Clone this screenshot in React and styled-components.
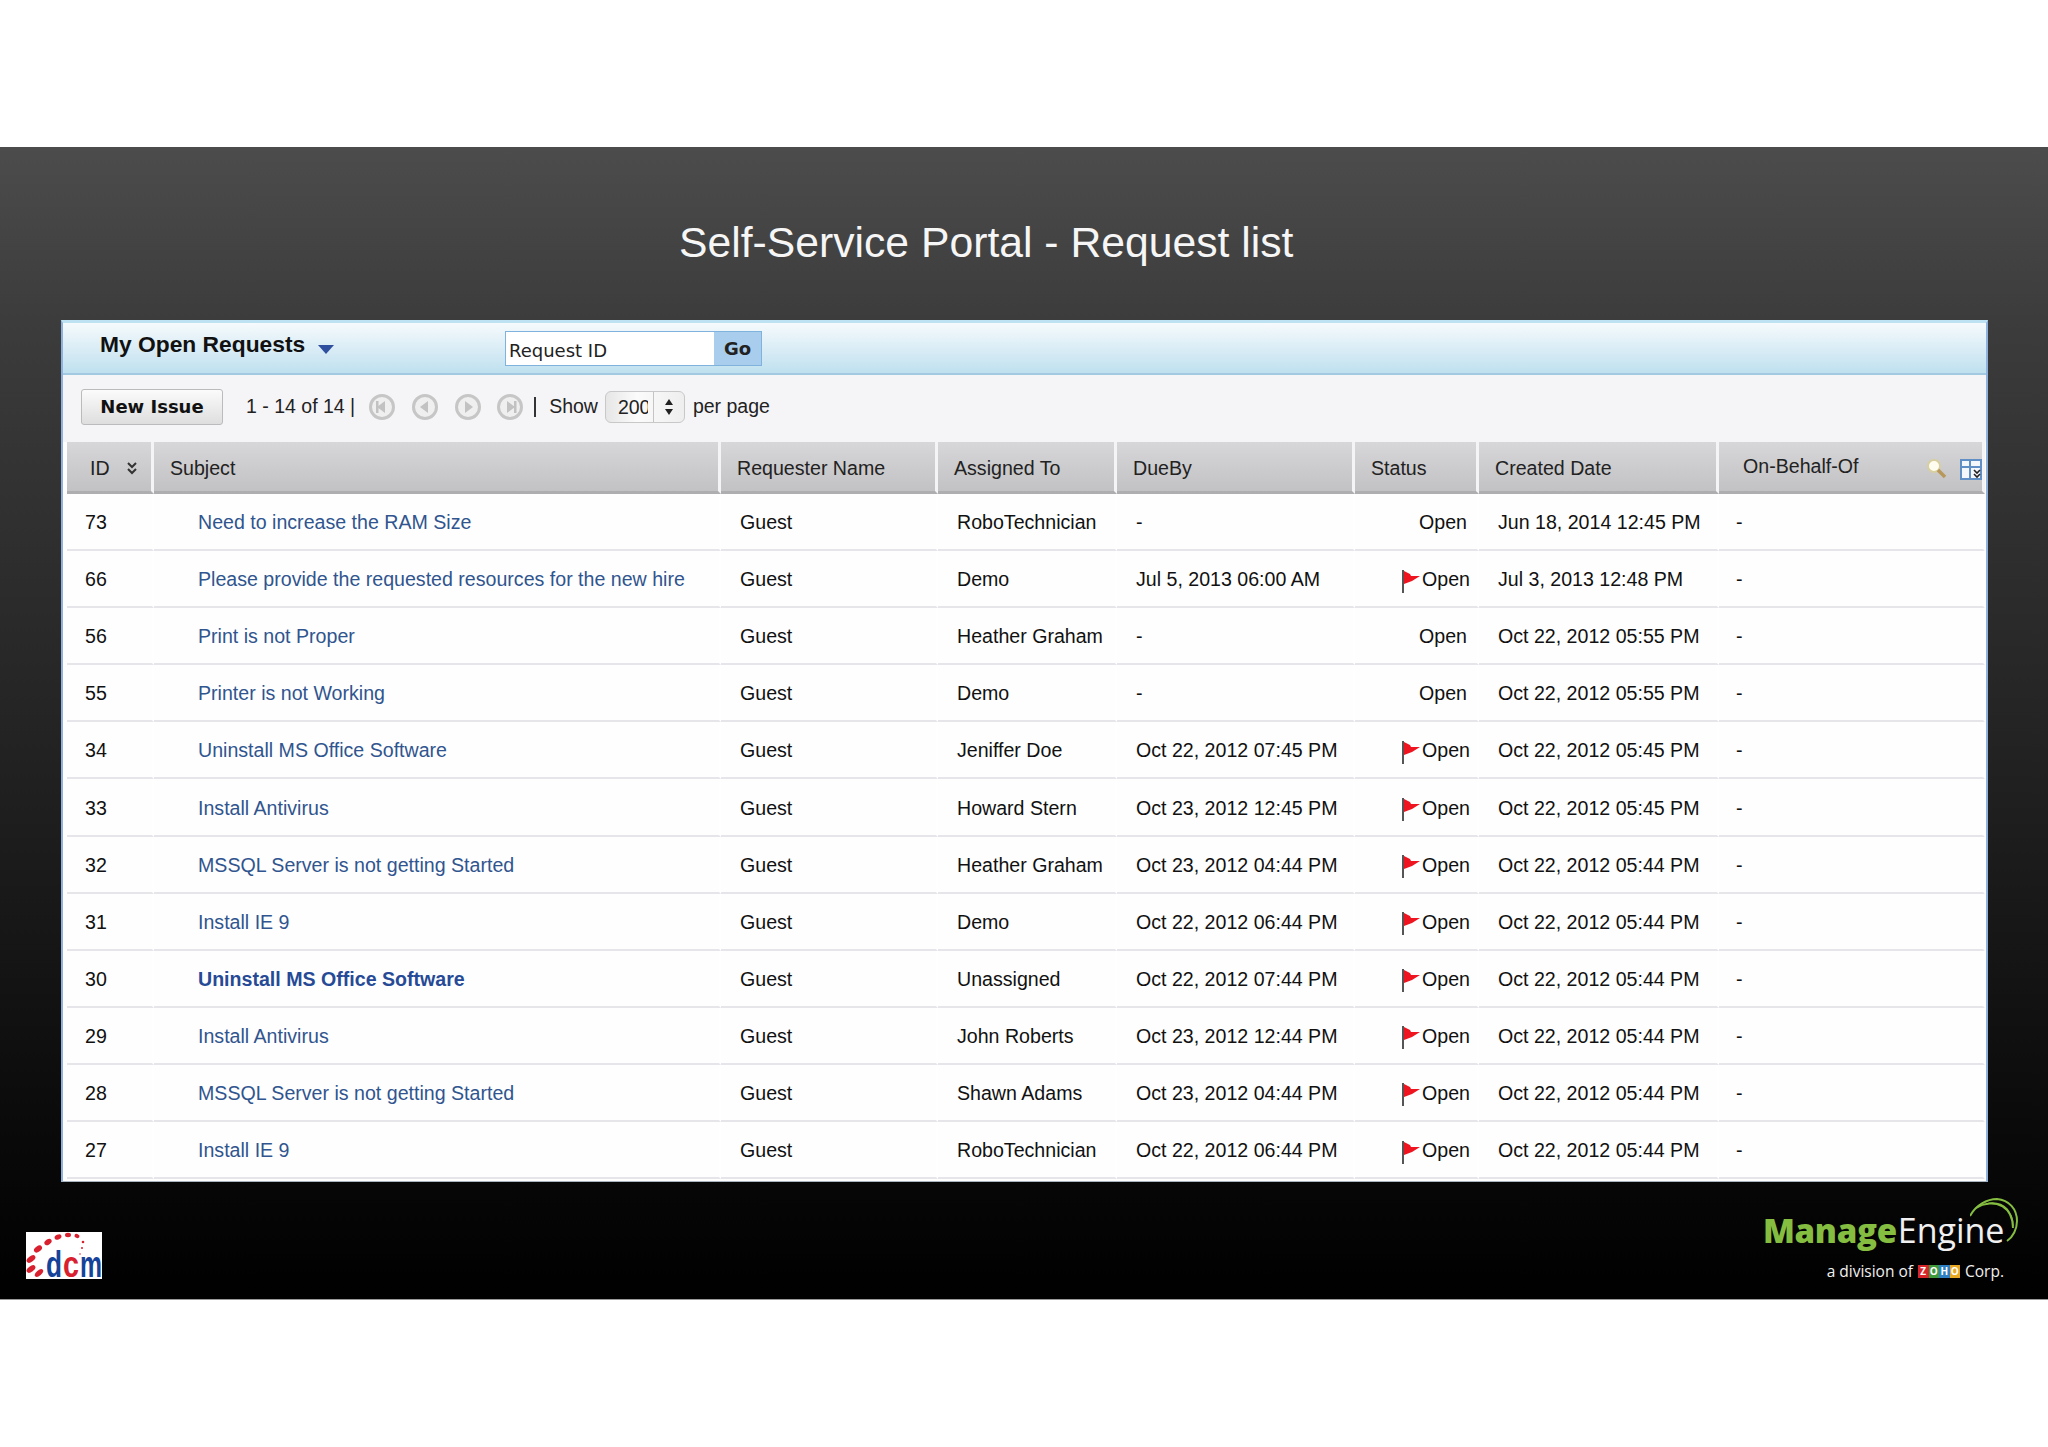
import React from "react";
import styled, { createGlobalStyle } from "styled-components";

const GlobalStyle = createGlobalStyle`
  html, body {
    margin: 0;
    padding: 0;
    background: #fff;
  }
  body {
    font-family: "Liberation Sans", Arial, sans-serif;
    color: #111;
  }
`;

const rows = [
  { id: 73, subject: "Need to increase the RAM Size", who: "RoboTechnician", due: "-", flag: false, created: "Jun 18, 2014 12:45 PM" },
  { id: 66, subject: "Please provide the requested resources for the new hire", who: "Demo", due: "Jul 5, 2013 06:00 AM", flag: true, created: "Jul 3, 2013 12:48 PM" },
  { id: 56, subject: "Print is not Proper", who: "Heather Graham", due: "-", flag: false, created: "Oct 22, 2012 05:55 PM" },
  { id: 55, subject: "Printer is not Working", who: "Demo", due: "-", flag: false, created: "Oct 22, 2012 05:55 PM" },
  { id: 34, subject: "Uninstall MS Office Software", who: "Jeniffer Doe", due: "Oct 22, 2012 07:45 PM", flag: true, created: "Oct 22, 2012 05:45 PM" },
  { id: 33, subject: "Install Antivirus", who: "Howard Stern", due: "Oct 23, 2012 12:45 PM", flag: true, created: "Oct 22, 2012 05:45 PM" },
  { id: 32, subject: "MSSQL Server is not getting Started", who: "Heather Graham", due: "Oct 23, 2012 04:44 PM", flag: true, created: "Oct 22, 2012 05:44 PM" },
  { id: 31, subject: "Install IE 9", who: "Demo", due: "Oct 22, 2012 06:44 PM", flag: true, created: "Oct 22, 2012 05:44 PM" },
  { id: 30, subject: "Uninstall MS Office Software", who: "Unassigned", due: "Oct 22, 2012 07:44 PM", flag: true, created: "Oct 22, 2012 05:44 PM", bold: true },
  { id: 29, subject: "Install Antivirus", who: "John Roberts", due: "Oct 23, 2012 12:44 PM", flag: true, created: "Oct 22, 2012 05:44 PM" },
  { id: 28, subject: "MSSQL Server is not getting Started", who: "Shawn Adams", due: "Oct 23, 2012 04:44 PM", flag: true, created: "Oct 22, 2012 05:44 PM" },
  { id: 27, subject: "Install IE 9", who: "RoboTechnician", due: "Oct 22, 2012 06:44 PM", flag: true, created: "Oct 22, 2012 05:44 PM" },
];

const columns = "87px 567px 217px 179px 238px 124px 240px 1fr";

const Page = styled.div`
  width: 2048px;
  height: 1447px;
  overflow: hidden;
  padding-top: 147px;
  box-sizing: border-box;
`;

const Slide = styled.section`
  height: 1152px;
  background: linear-gradient(#4c4c4c 0, #3c3c3c 15%, #242424 50%, #0a0a0a 85%, #000 100%);
  padding: 0 60px 0 61px;
  box-sizing: border-box;
  box-shadow: 0 1px 0 #999;
`;

const Title = styled.h1`
  margin: 0;
  height: 173px;
  padding: 69px 0 0 618px;
  box-sizing: border-box;
  font-weight: 400;
  font-size: 42.7px;
  line-height: 52px;
  color: #f6f6f6;
  white-space: nowrap;
`;

const Panel = styled.div`
  height: 862px;
  background: #fefefe;
  border-left: 2px solid #8fb1dd;
  border-right: 2px solid #8fb1dd;
  border-bottom: 1px solid #aab4c0;
  border-top: 3px solid #bfe2f2;
  box-sizing: border-box;
  overflow: hidden;
`;

const ViewBar = styled.div`
  height: 50px;
  display: flex;
  align-items: center;
  padding-left: 37px;
  background: linear-gradient(#f6fafc, #bfe0ef);
  border-bottom: 2px solid #a3c9e0;
  box-sizing: content-box;
`;

const ViewName = styled.div`
  width: 204px;
  font-weight: 700;
  font-size: 22.8px;
  margin-top: -7px;
  white-space: nowrap;
  color: #111;
`;

const Caret = styled.span`
  width: 0;
  height: 0;
  margin: 0 1px -2px 14px;
  border-left: 8.5px solid transparent;
  border-right: 8.5px solid transparent;
  border-top: 9px solid #2f4f9f;
`;

const Search = styled.div`
  display: flex;
  height: 33px;
  margin-left: 170px;
  border: 1px solid #7fb2dc;
  background: #fff;
`;

const SearchInput = styled.div`
  width: 208px;
  padding: 8px 0 0 3px;
  box-sizing: border-box;
  font-family: "DejaVu Sans", sans-serif;
  font-size: 18px;
  line-height: 22px;
  color: #222;
`;

const GoButton = styled.div`
  width: 47px;
  background: #a9cdec;
  text-align: center;
  font-family: "DejaVu Sans", sans-serif;
  font-weight: 700;
  font-size: 18px;
  line-height: 33px;
  color: #222;
`;

const Toolbar = styled.div`
  height: 67px;
  display: flex;
  align-items: center;
  padding: 0 0 4px 18px;
  box-sizing: border-box;
  background: #f5f4f7;
  font-size: 19.5px;
  color: #222;
`;

const NewIssue = styled.div`
  width: 142px;
  height: 36px;
  border: 1px solid #bbb;
  border-radius: 3px;
  box-sizing: border-box;
  background: linear-gradient(#fbfbfb, #dedede);
  text-align: center;
  font-family: "DejaVu Sans", sans-serif;
  font-weight: 700;
  font-size: 18px;
  line-height: 34px;
  color: #111;
`;

const PageCount = styled.span`
  margin: 0 0 0 23px;
  white-space: nowrap;
`;

const Pager = styled.svg`
  width: 28px;
  height: 28px;
  margin-left: ${(p) => p.$gap}px;
  flex: none;
`;

const Divider = styled.span`
  width: 2px;
  height: 20px;
  margin: 0 13px 0 10px;
  background: #333;
`;

const SelectBox = styled.div`
  display: flex;
  width: 80px;
  height: 32px;
  margin: 0 8px 0 7px;
  border: 1px solid #c8c8c8;
  border-radius: 6px;
  box-sizing: border-box;
  background: linear-gradient(90deg, #e6e6e6, #fbfbfb 40%, #eee);
  overflow: hidden;
`;

const SelectValue = styled.div`
  width: 48px;
  padding-left: 12px;
  box-sizing: border-box;
  border-right: 1px solid #c4c4c4;
  line-height: 30px;
`;

const SelectText = styled.span`
  display: block;
  width: 30px;
  overflow: hidden;
  white-space: nowrap;
`;

const SelectArrows = styled.div`
  flex: 1;
  display: flex;
  align-items: center;
  justify-content: center;
`;

const Grid = styled.div`
  display: grid;
  grid-template-columns: ${columns};
  margin: 0 0 0 4px;
  width: 1918px;
`;

const HeadCell = styled.div`
  position: relative;
  height: 52px;
  display: flex;
  align-items: center;
  padding: 3px 0 0 ${(p) => p.$indent ?? 16}px;
  box-sizing: border-box;
  background: linear-gradient(#d7d6d8, #c2c1c3);
  border-bottom: 3px solid #aeadaf;
  border-right: 3px solid #f4f4f6;
  font-size: 19.6px;
  color: #222;
  &:last-child {
    border-right: 0;
  }
`;

const SortMark = styled.svg`
  width: 12px;
  height: 14px;
  margin-left: 16px;
`;

const BehalfLabel = styled.span`
  margin-top: -4px;
`;

const HeadTools = styled.div`
  position: absolute;
  right: 0;
  top: 16px;
  display: flex;
  gap: 12px;
`;

const Cell = styled.div`
  height: 57.1px;
  display: flex;
  align-items: center;
  padding-top: 2px;
  padding-left: ${(p) => p.$indent ?? 19}px;
  justify-content: ${(p) => (p.$end ? "flex-end" : "flex-start")};
  padding-right: ${(p) => (p.$end ? 7 : 0)}px;
  box-sizing: border-box;
  border-bottom: 2px solid #e6e6ea;
  border-right: 2px solid #fff;
  font-size: 19.6px;
  color: #111;
  white-space: nowrap;
`;

const SubjectLink = styled.a`
  color: ${(p) => (p.$bold ? "#274a96" : "#30558f")};
  font-weight: ${(p) => (p.$bold ? 700 : 400)};
  text-decoration: none;
`;

const OpenLabel = styled.span`
  margin-right: ${(p) => (p.$flag ? 0 : 3)}px;
`;

const Flag = styled.svg`
  width: 18px;
  height: 24px;
  margin: 2px 2px 0 0;
  flex: none;
`;

const Footer = styled.div`
  display: flex;
  justify-content: space-between;
  padding: 16px 0 0 0;
  margin: 0 -32px 0 -35px;
`;

const DcmLogo = styled.svg`
  width: 76px;
  height: 47px;
  margin-top: 34px;
`;

const MeLogo = styled.div`
  position: relative;
  width: 257px;
  height: 86px;
`;

const MeName = styled.div`
  padding-top: 10px;
  line-height: 44px;
  white-space: nowrap;
  font-family: "Open Sans", sans-serif;
`;

const MeGreen = styled.span`
  color: #85bd41;
  font-weight: 800;
  font-size: 33px;
  letter-spacing: -0.3px;
`;

const MeWhite = styled.span`
  color: #f0f0f0;
  font-weight: 400;
  font-size: 34px;
  margin-left: 1px;
`;

const MeSwoosh = styled.svg`
  position: absolute;
  right: 0;
  top: 0;
  width: 50px;
  height: 46px;
`;

const Division = styled.div`
  display: flex;
  align-items: center;
  justify-content: flex-end;
  gap: 5px;
  margin: 3px 16px 0 0;
  font-family: "Open Sans", sans-serif;
  font-size: 15.5px;
  line-height: 18px;
  color: #f0f0f0;
`;

const ZohoMark = styled.span`
  display: flex;
`;

const ZohoLetter = styled.span`
  width: 10.5px;
  height: 13px;
  background: ${(p) => p.$color};
  color: #fff;
  font-size: 10px;
  line-height: 13px;
  font-weight: 700;
  text-align: center;
`;

const PagerIcon = ({ gap, dir, end }) => (
  <Pager $gap={gap} viewBox="0 0 28 28">
    <circle cx="14" cy="14" r="11.5" fill="#efefef" stroke="#c6c6c6" strokeWidth="3" />
    {dir === "left" ? (
      <path d="M17 8v12l-8-6z" fill="#c2c2c2" />
    ) : (
      <path d="M11 8v12l8-6z" fill="#c2c2c2" />
    )}
    {end && <rect x={dir === "left" ? 8 : 18} y="8" width="2.5" height="12" fill="#c2c2c2" />}
  </Pager>
);

const FlagIcon = () => (
  <Flag viewBox="0 0 18 24">
    <path d="M0 1h2v23H0z" fill="#555" />
    <path d="M2 2l6 3 1 2h9l-8 5-8 3z" fill="#ee1420" />
  </Flag>
);

const LensIcon = () => (
  <svg width="22" height="22" viewBox="0 0 22 22">
    <circle cx="8" cy="8" r="6" fill="#fffdf0" stroke="#d8cfa0" strokeWidth="2" />
    <path d="M12 12l7 7" stroke="#b8985a" strokeWidth="3.5" />
  </svg>
);

const ColumnPicker = () => (
  <svg width="22" height="22" viewBox="0 0 22 22">
    <path d="M1 2h20v19H1zM1 9h20M10 2v19" fill="#f4f7fb" stroke="#5f8fc4" strokeWidth="2" />
    <path d="M14 12l3 3 3-3M14 16l3 3 3-3" fill="none" stroke="#222" strokeWidth="1.6" />
  </svg>
);

const App = () => (
  <>
    <GlobalStyle />
    <Page>
      <Slide>
        <Title>Self-Service Portal - Request list</Title>
        <Panel>
          <ViewBar>
            <ViewName>My Open Requests</ViewName>
            <Caret />
            <Search>
              <SearchInput>Request ID</SearchInput>
              <GoButton>Go</GoButton>
            </Search>
          </ViewBar>
          <Toolbar>
            <NewIssue>New Issue</NewIssue>
            <PageCount>1 - 14 of 14 |</PageCount>
            <PagerIcon gap={13} dir="left" end />
            <PagerIcon gap={15} dir="left" />
            <PagerIcon gap={15} dir="right" />
            <PagerIcon gap={14} dir="right" end />
            <Divider />
            <span>Show</span>
            <SelectBox>
              <SelectValue>
                <SelectText>200</SelectText>
              </SelectValue>
              <SelectArrows>
                <svg width="10" height="18" viewBox="0 0 10 18">
                  <path d="M5 1l4 6H1zM5 17l4-6H1z" fill="#222" />
                </svg>
              </SelectArrows>
            </SelectBox>
            <span>per page</span>
          </Toolbar>
          <Grid>
            <HeadCell $indent={23}>
              ID
              <SortMark viewBox="0 0 12 14">
                <path d="M2 2l4 4 4-4M2 8l4 4 4-4" fill="none" stroke="#333" strokeWidth="2" />
              </SortMark>
            </HeadCell>
            <HeadCell>Subject</HeadCell>
            <HeadCell>Requester Name</HeadCell>
            <HeadCell>Assigned To</HeadCell>
            <HeadCell>DueBy</HeadCell>
            <HeadCell>Status</HeadCell>
            <HeadCell>Created Date</HeadCell>
            <HeadCell $indent={24}>
              <BehalfLabel>On-Behalf-Of</BehalfLabel>
              <HeadTools>
                <LensIcon />
                <ColumnPicker />
              </HeadTools>
            </HeadCell>
            {rows.map((row) => (
              <React.Fragment key={row.id}>
                <Cell $indent={18}>{row.id}</Cell>
                <Cell $indent={44}>
                  <SubjectLink $bold={row.bold}>{row.subject}</SubjectLink>
                </Cell>
                <Cell>Guest</Cell>
                <Cell>{row.who}</Cell>
                <Cell>{row.due}</Cell>
                <Cell $end>
                  {row.flag && <FlagIcon />}
                  <OpenLabel $flag={row.flag}>Open</OpenLabel>
                </Cell>
                <Cell>{row.created}</Cell>
                <Cell $indent={17}>-</Cell>
              </React.Fragment>
            ))}
          </Grid>
        </Panel>
        <Footer>
          <DcmLogo viewBox="0 0 76 47">
            <rect width="76" height="47" fill="#fff" />
            <g fill="#d8202e">
              <ellipse cx="5" cy="27" rx="5" ry="2.8" transform="rotate(-35 5 27)" />
              <ellipse cx="5" cy="37" rx="5" ry="2.8" transform="rotate(-35 5 37)" />
              <ellipse cx="13" cy="41" rx="5" ry="2.6" transform="rotate(-40 13 41)" />
              <ellipse cx="12" cy="17" rx="4.5" ry="2.8" transform="rotate(-35 12 17)" />
              <ellipse cx="22" cy="10" rx="4" ry="2.6" transform="rotate(-35 22 10)" />
              <ellipse cx="32" cy="5" rx="3.6" ry="2.4" transform="rotate(-25 32 5)" />
              <ellipse cx="42" cy="3" rx="3" ry="2.2" />
              <ellipse cx="51" cy="4" rx="2.6" ry="2" transform="rotate(25 51 4)" />
              <circle cx="57" cy="10" r="1.3" />
              <circle cx="56" cy="16" r="1" />
              <circle cx="54" cy="22" r="0.8" />
            </g>
            <text x="20" y="45" fontFamily="Liberation Sans" fontWeight="700" fontSize="36" fill="#16439a" textLength="16" lengthAdjust="spacingAndGlyphs">d</text>
            <text x="37" y="45" fontFamily="Liberation Sans" fontWeight="700" fontSize="36" fill="#d8202e" textLength="16" lengthAdjust="spacingAndGlyphs">c</text>
            <text x="54" y="45" fontFamily="Liberation Sans" fontWeight="700" fontSize="36" fill="#16439a" textLength="22" lengthAdjust="spacingAndGlyphs">m</text>
          </DcmLogo>
          <MeLogo>
            <MeSwoosh viewBox="0 0 50 46">
              <path d="M0 18C6 7 17 1 27 1c12 1 20 10 20 22 0 8-4 16-10 20" fill="none" stroke="#85bd41" strokeWidth="2" />
              <path d="M6 10C14 5 24 4 32 8c8 5 11 12 11 22" fill="none" stroke="#85bd41" strokeWidth="2" />
              <path d="M16 6C24 4 32 6 37 11c4 5 6 11 6 17" fill="none" stroke="#85bd41" strokeWidth="1.5" />
            </MeSwoosh>
            <MeName>
              <MeGreen>Manage</MeGreen>
              <MeWhite>Engine</MeWhite>
            </MeName>
            <Division>
              <span>a division of</span>
              <ZohoMark>
                <ZohoLetter $color="#d6262c">Z</ZohoLetter>
                <ZohoLetter $color="#3f9a3a">O</ZohoLetter>
                <ZohoLetter $color="#2f7fc4">H</ZohoLetter>
                <ZohoLetter $color="#e9a823">O</ZohoLetter>
              </ZohoMark>
              <span>Corp.</span>
            </Division>
          </MeLogo>
        </Footer>
      </Slide>
    </Page>
  </>
);

export default App;
